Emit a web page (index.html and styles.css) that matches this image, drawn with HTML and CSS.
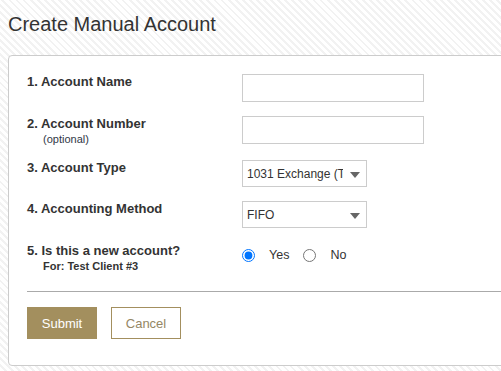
FILE: index.html
```html
<!DOCTYPE html>
<html>
<head>
<meta charset="utf-8">
<link rel="stylesheet" href="styles.css">
</head>
<body>
<div class="page">
<h1 class="title">Create Manual Account</h1>
<div class="card">
  <form class="form">
    <div class="row row-1">
      <div class="label">1. Account Name</div>
      <div class="control"><input class="text-input" type="text"></div>
    </div>
    <div class="row row-2">
      <div class="label">2. Account Number<div class="sub">(optional)</div></div>
      <div class="control"><input class="text-input" type="text"></div>
    </div>
    <div class="row row-3">
      <div class="label">3. Account Type</div>
      <div class="control"><span class="select-wrap"><select class="select"><option>1031 Exchange (Taxable)</option></select></span></div>
    </div>
    <div class="row row-4">
      <div class="label">4. Accounting Method</div>
      <div class="control"><span class="select-wrap"><select class="select"><option>FIFO</option></select></span></div>
    </div>
    <div class="row row-5">
      <div class="label">5. Is this a new account?<div class="sub sub-bold">For: Test Client #3</div></div>
      <div class="control">
        <div class="radios">
          <input class="radio" type="radio" name="isnew" checked><span class="radio-text">Yes</span>
          <input class="radio" type="radio" name="isnew"><span class="radio-text">No</span>
        </div>
      </div>
    </div>
    <div class="divider"></div>
    <div class="actions">
      <button type="button" class="btn btn-primary">Submit</button>
      <button type="button" class="btn btn-secondary">Cancel</button>
    </div>
  </form>
</div>
</div>
</body>
</html>
```
FILE: styles.css
```css
html, body {
  margin: 0;
  padding: 0;
}
body {
  font-family: "Liberation Sans", Arial, sans-serif;
  color: #333;
  background: repeating-linear-gradient(45deg, #ffffff 0, #ffffff 3px, #f2f2f2 3px, #f2f2f2 5px);
}
.page {
  width: 501px;
  height: 371px;
  overflow: hidden;
  box-sizing: border-box;
  padding: 8px 0 0 8px;
}
.title {
  margin: 0 0 19px 0;
  padding-top: 4px;
  font-size: 20px;
  font-weight: normal;
  line-height: 24px;
  color: #333;
}
.card {
  width: 530px;
  box-sizing: border-box;
  background: #fff;
  border: 1px solid #ccc;
  border-radius: 4px;
  padding: 18px 18px 26px 18px;
}
.form {
  margin: 0;
}
.row {
  display: grid;
  grid-template-columns: 215px 1fr;
}
.row-1 { height: 42px; }
.row-2 { height: 44px; }
.row-3 { height: 41px; }
.row-4 { height: 42px; }
.row-5 { height: 30px; }
.label {
  font-size: 13px;
  font-weight: bold;
  line-height: 16px;
  color: #333;
}
.sub {
  font-size: 11px;
  font-weight: normal;
  line-height: 14px;
  padding-left: 16px;
  color: #2f3746;
}
.sub-bold {
  font-weight: bold;
  color: #333;
}
.control {
  display: block;
}
.text-input {
  display: block;
  box-sizing: border-box;
  width: 182px;
  height: 28px;
  margin: 0;
  border: 1px solid #ccc;
  border-radius: 0;
  padding: 0 4px;
  font: 12px "Liberation Sans", Arial, sans-serif;
}
.select-wrap {
  position: relative;
  display: inline-block;
}
.select-wrap::after {
  content: "";
  position: absolute;
  right: 7px;
  top: 50%;
  margin-top: -2px;
  border-top: 6px solid #666;
  border-left: 5.5px solid transparent;
  border-right: 5.5px solid transparent;
  pointer-events: none;
}
.select {
  display: block;
  -webkit-appearance: none;
  appearance: none;
  box-sizing: border-box;
  width: 125px;
  height: 27px;
  margin: 0;
  border: 1px solid #ccc;
  border-radius: 0;
  background: #fff;
  padding: 0 23px 0 4px;
  font: 12px "Liberation Sans", Arial, sans-serif;
  color: #333;
}
.radios {
  display: flex;
  align-items: center;
  height: 20px;
  padding-top: 2px;
}
.radio {
  width: 13px;
  height: 13px;
  margin: 0 14px 0 0;
}
.radio-text {
  font-size: 12.5px;
  color: #333;
  margin-right: 14px;
}
.divider {
  height: 1px;
  background: #aaa;
  margin: 18px 0 15px 0;
}
.actions {
  display: flex;
  gap: 14px;
}
.btn {
  box-sizing: border-box;
  width: 70px;
  height: 32px;
  margin: 0;
  border-radius: 0;
  font: 13px "Liberation Sans", Arial, sans-serif;
  padding: 0;
  cursor: pointer;
}
.btn-primary {
  background: #a38f5e;
  border: 1px solid #a38f5e;
  color: #fff;
}
.btn-secondary {
  background: #fff;
  border: 1px solid #a38f5e;
  color: #958764;
}
```
